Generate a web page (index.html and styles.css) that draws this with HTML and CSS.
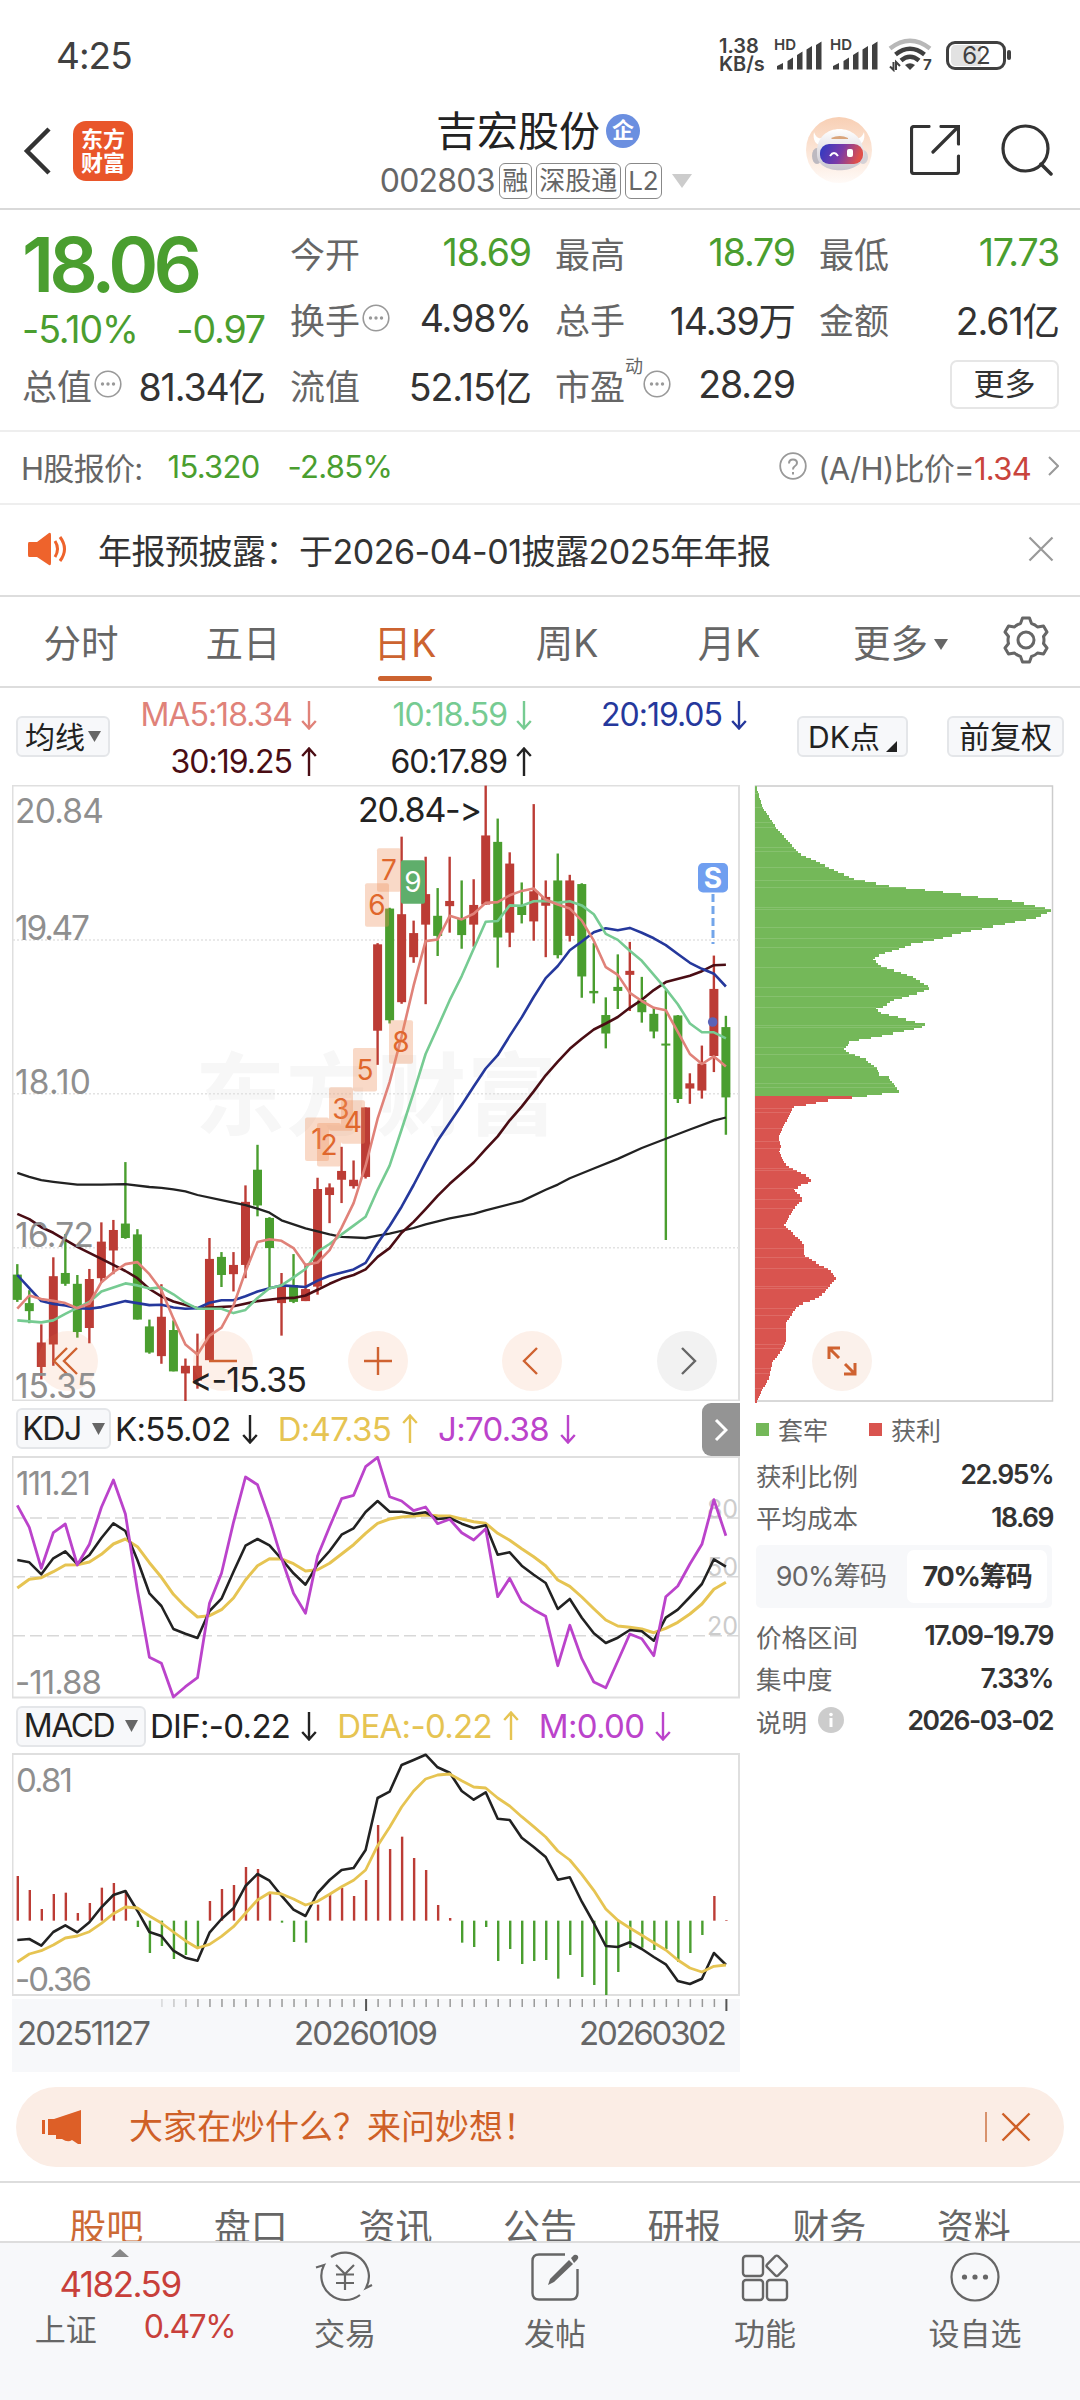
FILE: index.html
```html
<!DOCTYPE html>
<html lang="zh-CN">
<head>
<meta charset="utf-8">
<title>吉宏股份 002803</title>
<link rel="stylesheet" href="styles.css">
</head>
<body>
<svg class="defs" width="0" height="0">
  <symbol id="down" viewBox="0 0 16 30"><path d="M8 1V28M1.200 21L8 28.500L14.800 21" fill="none" stroke="currentColor" stroke-width="2.400"/></symbol>
  <symbol id="up" viewBox="0 0 16 30"><path d="M8 29V2M1.200 9L8 1.500L14.800 9" fill="none" stroke="currentColor" stroke-width="2.400"/></symbol>
  <symbol id="dots" viewBox="0 0 28 28"><circle cx="14" cy="14" r="12.800" fill="none" stroke="#999" stroke-width="1.600"/><circle cx="8.500" cy="14" r="1.700" fill="#999"/><circle cx="14" cy="14" r="1.700" fill="#999"/><circle cx="19.500" cy="14" r="1.700" fill="#999"/></symbol>
  <symbol id="bars" viewBox="0 0 46 30"><path d="M1 28.500V25L7 22V28.500ZM11.500 28.500V20L17 16.500V28.500ZM21 28.500V14L26.500 10.500V28.500ZM30.500 28.500V8.500L36 5V28.500ZM40 28.500V4L45.500 0.500V28.500Z" fill="#404040"/></symbol>
</svg>

<div class="status">
  <span class="clock">4:25</span>
  <div class="status-right">
    <div class="speed"><span>1.38</span><span>KB/s</span></div>
    <div class="signal"><b>HD</b><svg width="46" height="30"><use href="#bars"/></svg></div>
    <div class="signal"><b>HD</b><svg width="46" height="30"><use href="#bars"/></svg></div>
    <svg class="wifi" width="44" height="34" viewBox="0 0 44 34">
      <g fill="none" stroke-width="4.500"><path d="M2 10.500Q22-5 42 10.500" stroke="#b8b8b8"/><path d="M7.500 16.500Q22 5 36.500 16.500" stroke="#404040"/><path d="M13 22.500Q22 15 31 22.500" stroke="#404040"/></g>
      <path d="M17 27Q22 23.500 27 27L22 32Z" fill="#404040"/>
      <path d="M5.500 24V32L2 28.500M8 32V24L12 28" stroke="#404040" stroke-width="2" fill="none"/>
      <text x="35" y="32" font-size="15" font-weight="700" fill="#404040">7</text>
    </svg>
    <div class="battery"><span>62</span></div>
  </div>
</div>

<header class="top">
  <svg class="back" width="30" height="50" viewBox="0 0 30 50"><path d="M27 3L5 25L27 47" fill="none" stroke="#333" stroke-width="4.500"/></svg>
  <div class="logo"><span>东方</span><span>财富</span></div>
  <div class="title">
    <div class="name">吉宏股份<i>企</i></div>
    <div class="code"><span class="num">002803</span><em>融</em><em>深股通</em><em>L2</em><svg width="20" height="14"><path d="M0 0H20L10 14Z" fill="#ccc"/></svg></div>
  </div>
  <div class="actions">
    <svg width="66" height="66" viewBox="0 0 66 66">
      <defs><linearGradient id="halo" x2="0" y2="1"><stop offset="0" stop-color="#f8cfb4"/><stop offset="1" stop-color="#fffaf7"/></linearGradient>
      <linearGradient id="visor" x2="1" y2="0.200"><stop offset="0" stop-color="#2a3ac4"/><stop offset="0.550" stop-color="#7a3aa8"/><stop offset="1" stop-color="#e0504a"/></linearGradient>
      <linearGradient id="shell" x2="0" y2="1"><stop offset="0" stop-color="#fff"/><stop offset="1" stop-color="#c9c5ce"/></linearGradient></defs>
      <circle cx="33" cy="33" r="33" fill="url(#halo)"/>
      <ellipse cx="11" cy="39" rx="5" ry="8" fill="#bdb9c0"/><ellipse cx="57" cy="40" rx="5" ry="7" fill="#d5d1d6"/>
      <path d="M8 15C6 25 12 30 18 27L22 18C14 24 10 21 8 15ZM58 15C60 25 54 30 48 27L44 18C52 24 56 21 58 15Z" fill="#fff"/>
      <path d="M11 36C10 4 56 4 58 36C60 58 9 60 11 36Z" fill="url(#shell)"/>
      <rect x="14" y="27" width="43" height="20" rx="9" fill="url(#visor)"/>
      <path d="M25 21Q34 17 42 21V22H26Z" fill="#d9a57c"/>
      <path d="M24 39Q28 33 32 39" fill="none" stroke="#fff" stroke-width="2"/><rect x="41" y="32" width="6" height="8" rx="2" fill="#fff"/>
    </svg>
    <svg width="50" height="50" viewBox="0 0 50 50"><path d="M19 1.500H4Q1.500 1.500 1.500 4V46Q1.500 48.500 4 48.500H46Q48.500 48.500 48.500 46V31M31 1.500H48.500V19M48 2L23 27" fill="none" stroke="#333" stroke-width="3.200" stroke-linecap="round"/></svg>
    <svg width="52" height="52" viewBox="0 0 52 52"><path d="M40 40L50 50" stroke="#333" stroke-width="3.500" stroke-linecap="round"/><circle cx="24.500" cy="24.500" r="22.500" fill="none" stroke="#333" stroke-width="3.200"/></svg>
  </div>
</header>

<section class="quote">
  <div class="price">
    <strong>18.06</strong>
    <div class="pair green"><span>-5.10%</span><span>-0.97</span></div>
    <div class="pair"><label>总值<svg width="28" height="28"><use href="#dots"/></svg></label><span>81.34亿</span></div>
  </div>
  <div class="cells">
    <div class="pair green"><label>今开</label><span>18.69</span></div>
    <div class="pair green"><label>最高</label><span>18.79</span></div>
    <div class="pair green"><label>最低</label><span>17.73</span></div>
    <div class="pair"><label>换手<svg width="28" height="28"><use href="#dots"/></svg></label><span>4.98%</span></div>
    <div class="pair"><label>总手</label><span>14.39万</span></div>
    <div class="pair"><label>金额</label><span>2.61亿</span></div>
    <div class="pair"><label>流值</label><span>52.15亿</span></div>
    <div class="pair"><label>市盈<sup>动</sup><svg width="28" height="28"><use href="#dots"/></svg></label><span>28.29</span></div>
    <div class="pair"><button class="more">更多</button></div>
  </div>
</section>

<section class="hshare">
  <span>H股报价:</span><span class="g hprice">15.320</span><span class="g hpct">-2.85%</span>
  <div class="ratio"><svg width="28" height="28" viewBox="0 0 28 28"><circle cx="14" cy="14" r="12.800" fill="none" stroke="#999" stroke-width="1.800"/><path d="M10 11.500Q10 7.500 14 7.500T18 11Q18 13 15.500 14.500Q14 15.500 14 17.500M14 20V22.500" fill="none" stroke="#999" stroke-width="2"/></svg><span>(A/H)比价=<b>1.34</b></span><svg width="11" height="20"><path d="M1 1L10 10L1 19" fill="none" stroke="#999" stroke-width="2"/></svg></div>
</section>

<section class="notice">
  <svg width="42" height="34" viewBox="0 0 42 34"><path d="M1 10H9L21 1Q23 0 23 3V31Q23 34 21 33L9 25H1Q0 25 0 23V12Q0 10 1 10Z" fill="#ee632c"/><path d="M27 9Q32 17 27 25M32 5Q41 17 32 29" fill="none" stroke="#ee632c" stroke-width="3"/></svg>
  <span>年报预披露：于2026-04-01披露2025年年报</span>
  <svg class="x" width="26" height="26"><path d="M1.500 1.500L24.500 24.500M24.500 1.500L1.500 24.500" stroke="#999" stroke-width="2.200"/></svg>
</section>

<nav class="periods">
  <span>分时</span><span>五日</span><span class="on">日K</span><span>周K</span><span>月K</span><span class="wide">更多<svg width="14" height="11"><path d="M0 0H14L7 11Z" fill="#666"/></svg></span>
  <svg class="gear" width="48" height="48" viewBox="0 0 48 48"><path d="M20.500 2H27.500L29.500 7.500Q33 8.500 35.500 11L41.500 10L45 16L41.500 20.500Q42.500 24 41.500 27.500L45 32L41.500 38L35.500 37Q33 39.500 29.500 40.500L27.500 46H20.500L18.500 40.500Q15 39.500 12.500 37L6.500 38L3 32L6.500 27.500Q5.500 24 6.500 20.500L3 16L6.500 10L12.500 11Q15 8.500 18.500 7.500Z" fill="none" stroke="#666" stroke-width="3" stroke-linejoin="round"/><circle cx="24" cy="24" r="8" fill="none" stroke="#666" stroke-width="3"/></svg>
</nav>

<section class="mabar">
  <button class="chip">均线<svg width="13" height="11"><path d="M0 0H13L6.500 11Z" fill="#666"/></svg></button>
  <div class="mas">
    <span class="ma5">MA5:18.34<svg width="16" height="30"><use href="#down"/></svg></span>
    <span class="ma10">10:18.59<svg width="16" height="30"><use href="#down"/></svg></span>
    <span class="ma20">20:19.05<svg width="16" height="30"><use href="#down"/></svg></span>
    <span class="ma30">30:19.25<svg width="16" height="30"><use href="#up"/></svg></span>
    <span class="ma60">60:17.89<svg width="16" height="30"><use href="#up"/></svg></span>
  </div>
  <button class="chip dk">DK点<svg width="11" height="11"><path d="M11 0V11H0Z" fill="#222"/></svg></button>
  <button class="chip fq">前复权</button>
</section>

<main class="charts">
  <div class="left">
    <svg id="kline" width="728" height="616" viewBox="12 785 728 616"></svg>
    <div class="ind kdj">
      <button class="chip">KDJ<svg width="13" height="12"><path d="M0 0H13L6.500 12Z" fill="#666"/></svg></button>
      <span class="v1">K:55.02<svg width="16" height="30"><use href="#down"/></svg></span>
      <span class="v2">D:47.35<svg width="16" height="30"><use href="#up"/></svg></span>
      <span class="v3">J:70.38<svg width="16" height="30"><use href="#down"/></svg></span>
      <span class="next"><svg width="14" height="24"><path d="M2 2L12 12L2 22" fill="none" stroke="#fff" stroke-width="3"/></svg></span>
    </div>
    <svg id="kdj" width="728" height="243" viewBox="12 1456 728 243"></svg>
    <div class="ind macd">
      <button class="chip">MACD<svg width="13" height="12"><path d="M0 0H13L6.500 12Z" fill="#666"/></svg></button>
      <span class="v1">DIF:-0.22<svg width="16" height="30"><use href="#down"/></svg></span>
      <span class="v2">DEA:-0.22<svg width="16" height="30"><use href="#up"/></svg></span>
      <span class="v3">M:0.00<svg width="16" height="30"><use href="#down"/></svg></span>
    </div>
    <svg id="macd" width="728" height="243" viewBox="12 1753 728 243"></svg>
    <svg id="axis" width="728" height="73" viewBox="12 1999 728 73"></svg>
  </div>
  <div class="right">
    <svg id="dist" width="300" height="618" viewBox="754 785 300 618"></svg>
    <div class="legend"><span class="lg">套牢</span><span class="lr">获利</span></div>
    <dl>
      <div><dt>获利比例</dt><dd>22.95%</dd></div>
      <div><dt>平均成本</dt><dd>18.69</dd></div>
    </dl>
    <div class="seg"><span>90%筹码</span><span class="on">70%筹码</span></div>
    <dl>
      <div><dt>价格区间</dt><dd>17.09-19.79</dd></div>
      <div><dt>集中度</dt><dd>7.33%</dd></div>
      <div><dt>说明<svg width="26" height="26"><circle cx="13" cy="13" r="13" fill="#ccc"/><path d="M13 11V20" stroke="#fff" stroke-width="3"/><circle cx="13" cy="7.500" r="1.800" fill="#fff"/></svg></dt><dd>2026-03-02</dd></div>
    </dl>
  </div>
</main>

<section class="banner">
  <svg width="40" height="34" viewBox="0 0 40 34"><path d="M0 10H3V24H0ZM6 9H12L39 0V34H36L30 30Q26 33 20 29L14 29V25H6Z" fill="#dd5f27"/></svg>
  <span>大家在炒什么？来问妙想！</span>
  <svg class="x" width="30" height="30"><path d="M1.500 1.500L28.500 28.500M28.500 1.500L1.500 28.500" stroke="#cf6027" stroke-width="2.400"/></svg>
</section>

<nav class="topics"><span class="on">股吧</span><span>盘口</span><span>资讯</span><span>公告</span><span>研报</span><span>财务</span><span>资料</span></nav>

<footer class="dock">
  <div class="index">
    <svg width="18" height="8"><path d="M0 8L9 0L18 8Z" fill="#888"/></svg>
    <b>4182.59</b>
    <div><span>上证</span><b>0.47%</b></div>
  </div>
  <a><svg width="56" height="50" viewBox="0 0 56 50"><g fill="none" stroke="#666" stroke-width="2.200"><path d="M14 5A24 24 0 0 1 49 36L55 33M43 43A24 24 0 0 1 7 13L-1 15.500"/><path d="M19 13L28 22L37 13M19 22.500H37M19 31H37M28 22V38"/></g></svg>交易</a>
  <a><svg width="48" height="48" viewBox="0 0 48 48"><path d="M34 1.500H8Q1.500 1.500 1.500 8V40Q1.500 46.500 8 46.500H40Q46.500 46.500 46.500 40V16" fill="none" stroke="#666" stroke-width="2.400"/><path d="M17 32L19 26L38 7L42 11L23 29ZM40 5L43 2Q45 1 47 3Q48 5 46 7L43 10Z" fill="#666"/></svg>发帖</a>
  <a><svg width="48" height="48" viewBox="0 0 48 48"><g fill="none" stroke="#666" stroke-width="2.400"><rect x="2" y="3" width="20" height="20" rx="3"/><rect x="2" y="27" width="20" height="20" rx="3"/><rect x="26" y="27" width="20" height="20" rx="3"/><rect x="28" y="5" width="15.500" height="15.500" rx="2" transform="rotate(45 35.750 12.750)"/></g></svg>功能</a>
  <a><svg width="50" height="50" viewBox="0 0 50 50"><circle cx="25" cy="25" r="23.500" fill="none" stroke="#666" stroke-width="2.200"/><g fill="#666"><circle cx="14.500" cy="25" r="2.600"/><circle cx="25" cy="25" r="2.600"/><circle cx="35.500" cy="25" r="2.600"/></g></svg>设自选</a>
</footer>
<script src="chart.js"></script>
</body>
</html>
```
FILE: styles.css
```css
* { box-sizing: border-box; }
body { margin: 0; width: 1080px; height: 2400px; overflow: hidden; background: #fff; color: #333; font-family: Inter, "Noto Sans CJK SC", sans-serif; font-feature-settings: "calt" 0; display: flex; flex-direction: column; }
svg { flex: none; }
svg text { font-family: Inter, "Noto Sans CJK SC", sans-serif; font-feature-settings: "calt" 0; }
.defs { position: absolute; }
button { font: inherit; color: inherit; margin: 0; padding: 0; flex: none; }
label { display: flex; align-items: center; }

.status { height: 110px; flex: none; display: flex; justify-content: space-between; padding: 0 74px 0 56px; align-items: center; color: #404040; }
.clock { font-size: 37px; letter-spacing: -1px; }
.status-right { display: flex; align-items: center; height: 36px; }
.speed { display: flex; flex-direction: column; width: 55px; font-size: 20px; line-height: 18px; font-weight: 600; }
.signal { width: 56px; height: 32px; display: flex; position: relative; align-items: flex-end; padding-left: 2px; }
.signal b { position: absolute; left: 0; top: -2px; font-size: 15px; font-weight: 600; line-height: 16px; }
.wifi { margin: 0 14px 0 2px; }
.battery { width: 60px; height: 29px; border: 3px solid #404040; border-radius: 9px; font-size: 24px; line-height: 21px; text-align: center; position: relative; background: linear-gradient(90deg, #e2e2e2 60%, #fff 60%); background-clip: content-box; padding: 1px 2px; letter-spacing: -1px; }
.battery::after { content: ""; position: absolute; right: -8px; top: 6px; width: 4px; height: 10px; border-radius: 2px; background: #404040; }

.top { height: 100px; flex: none; border-bottom: 2px solid #d9d9d9; display: flex; align-items: center; padding: 0 27px 0 22px; }
.back { margin: 0 21px 16px 0; }
.logo { width: 60px; height: 60px; border-radius: 13px; background: #e9562a; color: #fff; display: flex; flex-direction: column; align-items: center; justify-content: center; font-size: 22px; font-weight: 700; line-height: 24px; margin-bottom: 16px; }
.title { flex: 1; display: flex; flex-direction: column; align-items: center; padding-left: 137px; margin-top: -6px; }
.name { display: flex; align-items: center; font-size: 41px; line-height: 52px; height: 46px; color: #222; gap: 6px; }
.name i { width: 34px; height: 34px; border-radius: 50%; background: #6b8fe0; color: #fff; font-size: 22px; font-style: normal; font-weight: 700; line-height: 33px; text-align: center; }
.code { display: flex; align-items: center; color: #666; font-size: 32px; line-height: 40px; gap: 4px; height: 48px; margin: 3px 4px 0 0; }
.code .num { letter-spacing: -0.800px; }
.code em { border: 1.500px solid #888; border-radius: 6px; font-style: normal; font-size: 26px; line-height: 34px; height: 36px; padding: 0 2.500px; }
.code svg { margin-left: 6px; }
.actions { display: flex; align-items: center; margin-bottom: 19px; gap: 38px; }
.actions svg:nth-child(3) { margin-left: 3px; }

.quote { height: 222px; flex: none; border-bottom: 2px solid #eee; display: flex; padding: 9px 21px 0 22px; gap: 25px; }
.price { width: 243px; display: flex; flex-direction: column; }
.price strong { font-size: 76px; line-height: 90px; height: 77px; color: #4a9e2f; font-weight: 600; letter-spacing: -5px; white-space: nowrap; }
.price .pair:nth-child(2) { margin-bottom: -11px; }
.cells { flex: 1; display: grid; grid-template-columns: 241px 240px 240px; grid-auto-rows: 66px; column-gap: 24px; }
.pair { height: 66px; display: flex; justify-content: space-between; align-items: center; font-size: 37.500px; letter-spacing: -1.100px; white-space: nowrap; }
.pair.green span, .g { color: #4a9e2f; }
.pair label { font-size: 35px; letter-spacing: 0; color: #666; }
.pair sup { font-size: 18px; align-self: flex-start; margin-top: -2px; line-height: 20px; }
.pair label svg { margin-left: 2px; }
.pair sup + svg { margin-left: 0; }
.more { margin-left: auto; width: 109px; height: 49px; border: 2px solid #e6e6e6; border-radius: 7px; background: #fff; font-size: 31px; letter-spacing: 0; line-height: 42px; }

.hshare { height: 73px; flex: none; border-bottom: 2px solid #eee; display: flex; align-items: center; padding: 0 21px 3px; font-size: 31px; color: #666; letter-spacing: -0.700px; }
.hprice { margin-left: 25px; }
.hpct { margin-left: 28px; }
.ratio { margin-left: auto; display: flex; align-items: center; }
.ratio span { margin: 0 17px 0 11px; letter-spacing: -0.700px; }
.ratio b { color: #c9443c; font-weight: 400; }

.notice { height: 92px; flex: none; border-bottom: 2px solid #ddd; display: flex; align-items: center; padding: 0 26px 2px 28px; font-size: 34px; gap: 28px; letter-spacing: -0.500px; }
.notice .x { margin-left: auto; }

.periods { height: 91px; flex: none; border-bottom: 2px solid #ddd; display: flex; align-items: center; padding-bottom: 3px; font-size: 37.500px; color: #666; }
.periods span { width: 162px; text-align: center; position: relative; }
.periods .wide { width: 181px; }
.periods .on { color: #cc6330; }
.periods .on::after { content: ""; position: absolute; left: 54px; bottom: -13px; width: 54px; height: 5px; border-radius: 3px; background: #cc6330; }
.periods .wide svg { margin-left: 6px; vertical-align: 7px; }
.gear { margin-left: 11px; }

.chip { background: #f7f8fa; border: 2px solid #e4e6e9; border-radius: 6px; height: 41px; display: flex; align-items: center; justify-content: center; font-size: 30px; color: #222; white-space: nowrap; line-height: 34px; }
.mabar { height: 97px; flex: none; display: flex; padding: 0 16px; }
.mabar .chip { margin-top: 28px; width: 94px; gap: 3px; }
.mabar .dk { width: 111px; margin-left: 39px; gap: 6px; }
.mabar .dk svg { margin-top: 19px; }
.mabar .fq { width: 117px; margin-left: 39px; font-size: 31px; }
.mas { width: 648px; display: grid; grid-template-columns: 207px 215px 215px; grid-auto-rows: 47px; margin-top: 3px; align-content: start; font-size: 32px; letter-spacing: -1px; }
.mas span { display: flex; align-items: center; justify-content: flex-end; gap: 9px; white-space: nowrap; }
.ma5 { color: #e08279; }
.ma10 { color: #76cb92; }
.ma20 { color: #25389c; }
.ma30 { color: #4a0d14; }
.ma60 { color: #222; }

.charts { height: 1287px; flex: none; display: flex; padding-left: 12px; gap: 14px; }
.left { width: 728px; display: flex; flex-direction: column; }
.ind { height: 55px; display: flex; align-items: center; font-size: 33px; padding-left: 4px; letter-spacing: -0.700px; position: relative; white-space: nowrap; }
.ind.macd { height: 54px; }
.ind .chip { width: 95px; gap: 11px; font-size: 32px; margin-right: 4px; letter-spacing: -1.500px; }
.macd .chip { width: 130px; }
.ind span { display: flex; align-items: center; gap: 11px; margin-right: 20px; }
.v1 { color: #222; }
.v2 { color: #e6c452; }
.v3 { color: #bb43cb; }
.ind .next { position: absolute; right: 0; top: 2px; width: 38px; height: 53px; margin: 0; background: #949494; border-radius: 9px 0 0 9px; justify-content: center; }
#axis { margin-top: 3px; }

.right { width: 300px; display: flex; flex-direction: column; padding-right: 1px; color: #666; font-size: 25.500px; }
.right #dist { margin-bottom: 6px; }
.legend { display: flex; height: 40px; align-items: center; gap: 41px; padding-left: 2px; font-size: 25px; }
.legend span { display: flex; align-items: center; gap: 9px; }
.legend span::before { content: ""; width: 13px; height: 13px; background: #74b859; }
.legend .lr::before { background: #d9544f; }
dl { margin: 4px 0 0 2px; }
dl div { display: flex; justify-content: space-between; align-items: center; height: 42.500px; }
dt { display: flex; align-items: center; gap: 11px; }
dd { margin: 0; color: #333; font-weight: 600; font-size: 26.500px; letter-spacing: -1.500px; }
.seg { margin: 7px 1px 2px 2px; height: 63px; background: #f7f8fa; border-radius: 5px; display: flex; padding: 5px; font-size: 27px; }
.seg span { flex: 1; text-align: center; line-height: 54px; height: 53px; border-radius: 7px; letter-spacing: -0.800px; }
.seg span:first-child { padding-right: 6px; }
.seg .on { background: #fff; color: #333; font-weight: 700; letter-spacing: -1.200px; }

.banner { margin: 15px 16px 14px; height: 80px; flex: none; border-radius: 40px; background: #fbede5; color: #cf6027; display: flex; align-items: center; padding: 0 33px 0 26px; font-size: 34px; gap: 47px; line-height: 40px; }
.banner .x { margin-left: auto; box-sizing: content-box; padding-left: 14px; border-left: 2px solid #d8926c; }

.topics { height: 60px; flex: none; border-top: 2px solid #ddd; display: flex; overflow: hidden; padding: 19px 34px 0; font-size: 37px; line-height: 52px; color: #666; }
.topics span { width: 144.700px; text-align: center; }
.topics .on { color: #cc6a35; }

.dock { flex: 1; border-top: 2px solid #ddd; background: #f7f8fa; display: flex; color: #666; font-size: 31px; }
.dock a { width: 210px; display: flex; flex-direction: column; align-items: center; padding-top: 8px; line-height: 40px; }
.dock a svg { height: 52px; margin-bottom: 11px; overflow: visible; }
.index { width: 240px; display: flex; flex-direction: column; align-items: center; padding-top: 6px; }
.index b { color: #c8403a; font-weight: 400; font-size: 35px; letter-spacing: -1.500px; line-height: 54px; }
.index > b { height: 44px; }
.index div { display: flex; gap: 47px; align-items: center; height: 52px; padding-left: 30px; }
.index div b { font-size: 32px; line-height: 40px; }
```
FILE: chart.js
```js
const X0 = 17.3, STEP = 12.01;
const RED = '#bc3c35', GREEN = '#4a9e2f';
const x = i => X0 + STEP * i;
const ky = v => 780 + v / 2.489;
const iy = base => v => base + v / 3;

function curve(text, y, color, w = 2.6) {
  const pts = text.trim().split(/\s+/).map(p => p.split(':').map(Number));
  return `<polyline fill="none" stroke="${color}" stroke-width="${w}" stroke-linejoin="round" points="${pts.map(([i, v]) => x(i).toFixed(1) + ',' + y(v).toFixed(1)).join(' ')}"/>`;
}
function label(s, x1, x2, y, size, color, extra = '') {
  return `<text x="${x1}" y="${y}" font-size="${size}" fill="${color}" textLength="${x2 - x1}" ${extra}>${s}</text>`;
}
const seq = s => s.trim().split(/\s+/).map((v, i) => i + ':' + v).join(' ');

// direction, high, body top, body bottom, low
const candles = `g 1205 1231 1294 1299;g 1270 1302 1322 1352;r 1355 1400 1461 1492;r 1188 1235 1405 1458;g 1130 1227 1254 1259;g 1232 1254 1374 1388;r 1217 1242 1364 1402;r 1101 1149 1240 1252;r 1095 1120 1171 1230;g 951 1104 1140 1142;g 1118 1131 1343 1343;g 1343 1360 1425 1428;r 1255 1336 1434 1453;g 1345 1369 1472 1472;r 1440 1458 1477 1548;r 1378 1458 1495 1515;r 1140 1192 1444 1444;g 1175 1187 1232 1262;r 1175 1207 1230 1273;r 1009 1050 1207 1240;g 908 970 1059 1086;g 1088 1090 1165 1265;r 1227 1260 1302 1383;g 1180 1257 1299 1302;r 1205 1267 1297 1297;r 990 1018 1261 1281;r 1004 1014 1033 1103;r 913 973 995 1053;r 947 995 1011 1017;r 815 815 988 992;r 406 409 624 709;g 318 320 598 606;r 141 334 553 557;r 350 381 441 455;r 191 284 360 558;g 269 338 388 438;r 191 301 314 380;g 250 346 386 420;r 247 311 360 415;r 14 138 310 310;g 96 154 392 467;r 180 208 380 416;g 255 313 336 357;r 60 277 352 400;r 250 291 313 441;g 183 250 436 444;r 236 250 388 402;g 257 259 489 542;g 406 525 531 556;g 541 585 631 668;g 434 515 525 570;r 403 475 485 575;g 490 548 578 604;g 565 582 626 643;g 523 656 661 1145;g 585 586 794 804;r 730 755 768 806;r 661 706 773 793;r 437 520 687 727;g 587 615 790 883`
  .split(';').map(r => r.split(' '));

let k = '<text x="195" y="1128" font-size="90" font-weight="700" fill="#f7f7f7" textLength="362">东方财富</text>';
k += '<rect x="12.500" y="785.500" width="726.500" height="615" fill="none" stroke="#dfdfdf" stroke-width="2"/>';
for (const y of [939.9, 1093.8, 1247.7]) k += `<path d="M13 ${y}H739" stroke="#e2e2e2" stroke-width="1.500" stroke-dasharray="2 2"/>`;
candles.forEach(([d, h, t, b, l], i) => {
  const c = d === 'r' ? RED : GREEN;
  k += `<path d="M${x(i)} ${ky(+h)}V${ky(+l)}" stroke="${c}" stroke-width="2.400"/><rect x="${x(i) - 4.5}" y="${ky(+t)}" width="9" height="${(b - t) / 2.489}" fill="${c}"/>`;
});
k += curve('0:978 1:988 2:996 3:1000 5:1007 7:1007 9:1006 11:1013 12:1015 13:1019 14:1024 15:1033 17:1046 19:1058 20:1067 21:1077 22:1096 24:1116 26:1131 27:1137 29:1140 30:1134 31:1129 33:1115 34:1106 36:1091 38:1080 39:1071 42:1048 44:1020 45:1007 46:991 48:967 50:943 52:916 54:893 56:870 58:848 59:840', ky, '#222', 2.3);
k += curve('0:1080 1:1093 2:1113 3:1127 5:1162 7:1192 9:1222 10:1240 11:1267 12:1285 13:1298 15:1315 18:1310 20:1297 22:1290 23:1289 24:1283 25:1269 26:1254 27:1241 28:1232 29:1218 30:1187 31:1165 32:1127 33:1100 34:1068 35:1035 36:1005 37:979 38:952 39:919 40:887 41:847 42:813 43:775 44:735 45:701 46:669 47:644 48:621 49:606 50:590 51:567 52:547 53:523 54:503 56:487 57:476 58:461 59:460', ky, '#4a0d14');
k += curve('0:1232 1:1265 2:1297 3:1304 4:1308 5:1315 6:1316 7:1312 8:1304 9:1297 11:1307 12:1306 13:1313 14:1316 15:1315 16:1301 17:1295 18:1295 19:1285 20:1273 21:1265 22:1258 24:1262 25:1246 26:1234 28:1218 29:1202 30:1153 31:1110 32:1062 33:1008 34:951 35:898 36:853 37:809 38:763 39:718 40:685 41:637 42:591 43:540 44:493 45:463 46:424 47:402 48:379 49:369 50:374 51:368 52:380 53:394 54:411 55:433 56:455 57:470 58:482 59:514', ky, '#25389c');
k += curve('0:1345 2:1350 3:1345 4:1329 5:1314 6:1299 7:1273 9:1253 10:1258 11:1266 12:1263 13:1280 14:1301 15:1316 17:1316 18:1327 19:1319 20:1289 21:1265 22:1258 23:1238 24:1217 25:1174 26:1155 27:1131 28:1109 29:1087 30:1020 31:960 32:870 33:778 34:682 35:616 36:548 37:488 38:420 39:353 40:351 41:312 42:313 43:302 44:301 45:306 46:302 47:312 48:334 49:383 50:398 51:425 52:450 53:485 54:520 55:558 56:606 57:628 58:628 59:643', ky, '#76cb92');
k += curve('0:1316 1:1283 2:1292 3:1296 4:1302 5:1315 6:1303 7:1250 8:1225 9:1205 10:1200 11:1230 12:1270 13:1340 14:1405 15:1430 16:1383 17:1363 18:1308 19:1223 20:1150 21:1143 22:1147 23:1165 24:1207 25:1201 26:1170 27:1114 28:1053 29:960 30:843 31:752 32:638 33:512 34:401 35:397 36:338 37:347 38:333 39:306 40:304 41:287 42:276 43:270 44:298 45:310 46:320 47:350 48:400 49:466 50:485 51:530 52:550 53:567 54:573 55:627 56:682 57:707 58:688 59:713', ky, '#e08279');

[[1, 915, 840], [2, 951, 854], [3, 987, 765], [4, 1023, 797], [5, 1059, 667], [6, 1095, 257], [7, 1131, 170], [8, 1167, 598], [9, 1203, 200]].forEach(([n, bx, by]) => {
  const done = n === 9;
  k += `<rect x="${bx / 3}" y="${ky(by)}" width="24" height="43.500" rx="2" fill="${done ? '#5fae6b' : 'rgba(238,145,95,.35)'}"/><text x="${bx / 3 + 12}" y="${ky(by) + 32}" font-size="28" text-anchor="middle" fill="${done ? '#fff' : '#e0672c'}">${n}</text>`;
});

k += '<path d="M713 894V944" stroke="#73a5ea" stroke-width="3" stroke-dasharray="8 4"/><rect x="698" y="863" width="30" height="29.500" rx="5" fill="#709ff0"/><text x="713" y="888" font-size="28" font-weight="700" text-anchor="middle" fill="#fff">S</text><circle cx="712.700" cy="1022" r="4.800" fill="#5b63b8"/>';

for (const c of [68, 223, 378, 532]) k += `<circle cx="${c}" cy="1361" r="30" fill="rgba(235,130,75,.12)"/>`;
k += '<circle cx="687" cy="1361" r="30" fill="#f2f2f2"/>';
k += '<g fill="none" stroke="#cf6230" stroke-width="2.400"><path d="M67 1348L54 1361L67 1374M77 1348L64 1361L77 1374M209 1361H237M364 1361H392M378 1347V1375M537 1348L524 1361L537 1374"/><path d="M682 1348L695 1361L682 1374" stroke="#666"/></g>';

[['20.84', 103, 823.4], ['19.47', 89, 940], ['18.10', 90, 1094], ['16.72', 93, 1247], ['15.35', 96, 1397.5]].forEach(([s, e, y]) => k += label(s, 15, e + 1, y, 33.5, '#8f8f8f'));
k += label('20.84-&gt;', 358, 482, 821.8, 34, '#222') + label('&lt;-15.35', 190, 307, 1391.5, 34, '#222');
document.getElementById('kline').innerHTML = k;

// KDJ
const y1 = iy(1400);
let j = '<rect x="12.500" y="1457" width="726.500" height="240.500" fill="none" stroke="#dfdfdf" stroke-width="2"/>';
for (const v of [354, 530, 707]) j += `<path d="M13 ${y1(v)}H739" stroke="#d8d8d8" stroke-width="1.500" stroke-dasharray="12 5"/>`;
j += label('80', 707, 738, 1517.5, 25, '#ccc') + label('50', 707, 738, 1576, 25, '#ccc') + label('20', 707, 738, 1635, 25, '#ccc');
j += label('111.21', 16, 91, 1494.5, 33, '#8f8f8f') + label('-11.88', 15, 102, 1693.5, 33, '#8f8f8f');
j += curve(seq('564 538 533 515 495 494 486 463 432 417 440 488 532 583 620 651 647 629 594 540 497 476 477 491 513 509 490 462 434 400 370 357 351 348 345 347 348 357 365 370 400 421 446 470 497 540 559 591 626 660 678 682 687 698 685 667 642 612 568 547'), y1, '#e6c452', 3);
j += curve(seq('480 487 523 475 454 492 465 414 370 393 480 580 618 687 701 714 633 596 515 437 417 436 477 520 554 493 453 404 385 336 303 335 335 342 337 357 354 371 384 376 464 457 497 524 549 627 597 653 700 729 713 690 694 722 653 629 591 552 478 500'), y1, '#222');
j += curve(seq('316 382 505 398 372 495 433 322 240 342 570 772 790 891 860 833 610 520 367 231 254 357 475 580 640 468 380 296 286 200 172 290 303 332 321 371 358 398 420 386 590 535 605 629 649 797 676 776 846 863 783 702 716 767 590 558 492 433 299 407'), y1, '#bb43cb', 2.8);
document.getElementById('kdj').innerHTML = j;

// MACD
const y2 = iy(1700);
let m = '<rect x="12.500" y="1754" width="726.500" height="241" fill="none" stroke="#dfdfdf" stroke-width="2"/>';
'528 570 627 582 578 639 609 563 549 572 681 759 738 777 765 741 603 567 555 501 507 582 668 726 728 614 580 564 588 540 375 447 410 474 510 615 654 728 741 681 783 747 792 783 780 836 765 831 855 885 816 744 743 750 747 786 759 705 588 660'
  .split(' ').forEach((v, i) => m += `<path d="M${x(i) + 0.5} ${y2(662)}V${y2(+v)}" stroke="${v < 662 ? RED : GREEN}" stroke-width="2.400"/>`);
m += label('0.81', 16, 73, 1791.5, 33, '#8f8f8f') + label('-0.36', 15, 92, 1990.5, 33, '#8f8f8f');
m += curve(seq('720 717 737 696 676 697 667 622 585 573 632 696 708 752 773 782 698 657 625 558 522 542 587 629 648 579 540 510 504 450 294 275 195 180 164 202 218 273 299 277 356 360 413 441 471 539 532 605 669 738 741 727 747 771 793 843 852 836 759 794'), y2, '#222');
m += curve(seq('786 762 752 735 714 708 695 670 641 621 624 648 669 696 722 744 733 709 680 640 600 578 582 597 615 604 583 560 541 510 437 382 321 273 237 225 222 242 261 264 294 318 350 380 411 453 480 523 571 627 661 684 706 728 750 780 804 816 799 795'), y2, '#e6c452', 2.8);
document.getElementById('macd').innerHTML = m;

let a = '<rect x="12" y="1999" width="728" height="73" fill="#f7f8fa"/>';
for (let i = 12; i < 60; i++) {
  const major = i === 29 || i === 59;
  a += `<path d="M${x(i) + 0.5} 1999V${major ? 2011 : 2007}" stroke="${major ? '#555' : '#999'}" stroke-width="${major ? 2 : 1.5}" opacity="${Math.min(1, (i - 10) / 6)}"/>`;
}
a += label('20251127', 17, 151, 2045, 33, '#666') + label('20260109', 294, 438, 2045, 33, '#666') + label('20260302', 579, 727, 2045, 33, '#666');
document.getElementById('axis').innerHTML = a;

// Cost distribution: [width, row]
const edge = [[50,16],[68,66],[110,118],[150,155],[180,182],[230,200],[290,225],[340,243],[380,250],[420,257],[470,263],[520,268],[575,273],[630,279],[680,284],[730,290],[780,294],[830,301],[862,306],[893,312],[928,318],[935,323],[910,330],[885,339],[850,345],[820,350],[785,356],[748,362],[718,367],[688,372],[658,378],[628,384],[603,389],[573,395],[542,400],[510,405],[468,418],[430,428],[412,434],[397,441],[422,460],[458,470],[515,486],[550,504],[573,513],[555,520],[505,533],[455,545],[430,560],[407,566],[425,577],[470,587],[530,600],[555,604],[545,610],[515,617],[450,628],[390,638],[330,647],[310,667],[328,677],[375,692],[415,718],[416,733],[445,737],[476,771],[428,776],[380,782],[330,788],[284,790],[236,797],[197,804],[160,810],[135,850],[115,886],[122,908],[118,920],[133,952],[180,975],[205,985],[214,996],[180,1005],[160,1017],[190,1040],[165,1057],[132,1105],[193,1153],[193,1180],[240,1205],[272,1218],[287,1237],[265,1258],[252,1273],[220,1290],[180,1300],[168,1310],[137,1348],[138,1395],[125,1415],[97,1445],[87,1485],[62,1520],[50,1547]];
let d = '<rect x="755.500" y="786" width="297" height="615" fill="none" stroke="#ccc" stroke-width="1.500"/><g shape-rendering="crispEdges">';
const row = 5.55;
let n = 0;
for (let v = 16, s = 0; v < 1547; v += row, n++) {
  while (s < edge.length - 2 && edge[s + 1][1] < v) s++;
  const [xa, va] = edge[s], [xb, vb] = edge[s + 1];
  const e = xa + (xb - xa) * Math.min(1, (v - va) / (vb - va));
  const size = `x="755" y="${ky(v).toFixed(2)}" width="${(e / 3 - 15).toFixed(1)}"`;
  d += `<rect ${size} height="3" fill="${v < 787 ? '#74b859' : '#d9544f'}"/>`;
  if (n % 9 === 0 || n % 13 === 3) d += `<rect ${size} height="1" fill="#fff" opacity=".13"/>`;
}
d += '</g><circle cx="842" cy="1361" r="30" fill="#fbf1eb"/><path d="M839 1358L829 1348M829 1359V1348H840M845 1364L855 1374M855 1363V1374H844" fill="none" stroke="#cf6230" stroke-width="3"/>';
document.getElementById('dist').innerHTML = d;
```
